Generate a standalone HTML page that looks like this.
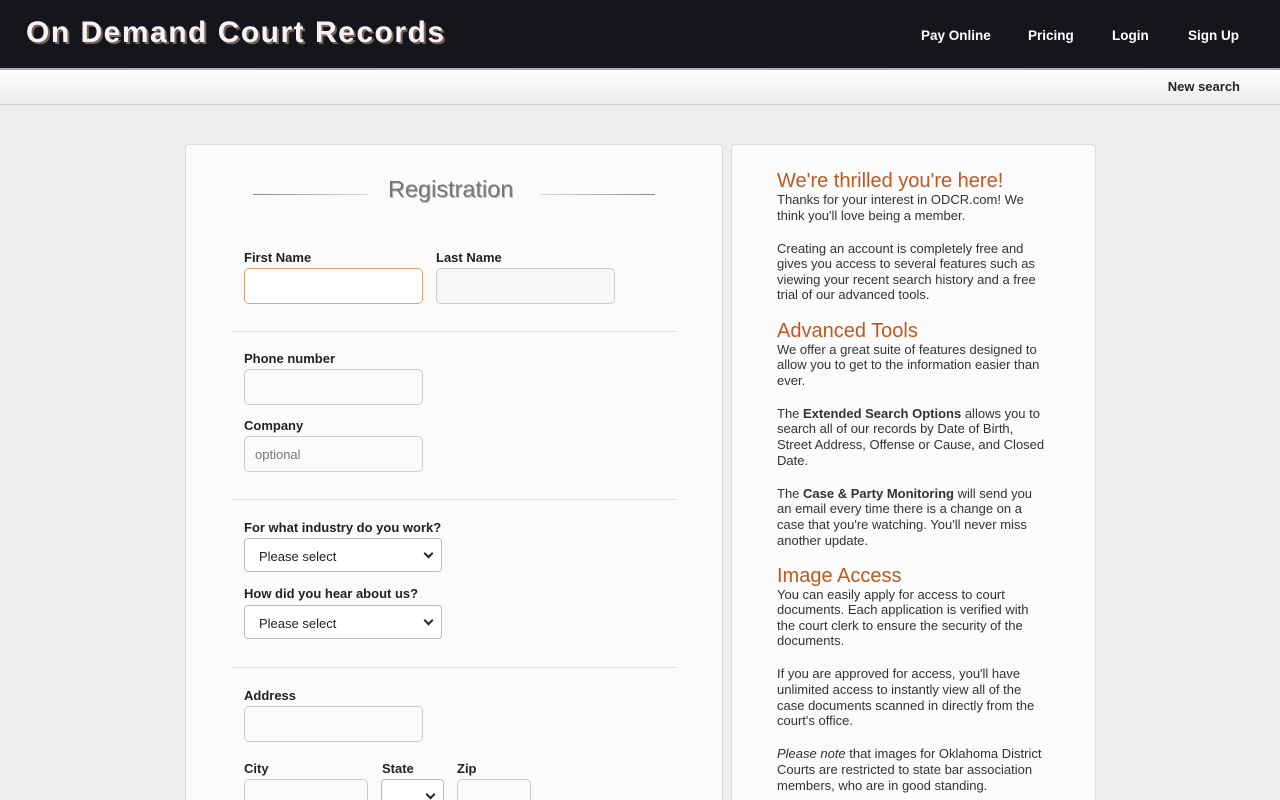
<!DOCTYPE html>
<html><head><style>
html,body{margin:0;width:1280px;height:800px;overflow:hidden}
body{background:#eceeef;font-family:"Liberation Sans",Arial,sans-serif;position:relative}
.hdr{position:absolute;left:0;top:0;width:1280px;height:68px;background:#14161b;border-bottom:2px solid #aab}
.logo{position:absolute;left:26px;top:16px;font:900 30px "Liberation Sans",sans-serif;color:#f4f4f8;letter-spacing:1.5px;text-shadow:2px 2px 0 #765}
.nav a{position:absolute;top:28px;color:#fff;font-weight:bold;font-size:13.5px;text-decoration:none}
.sub{position:absolute;left:0;top:70px;width:1280px;height:34px;background:linear-gradient(#fff,#ececec);border-bottom:1px solid #ccc}
.sub span{position:absolute;right:40px;top:9px;font-weight:bold;font-size:13px;color:#222}
.panel{position:absolute;background:#fbfbfb;border:1px solid #ddd;border-radius:4px}
.lbl{position:absolute;font-weight:bold;font-size:13px;color:#222}
.in{position:absolute;width:177px;height:34px;border:1px solid #ccc;border-radius:5px;background:#fbfbfb}
.sel{position:absolute;width:198px;height:34px;border:1px solid #bbb;border-radius:4px;background:#fff;font-size:13px;color:#222;box-sizing:border-box;padding:10px 14px}
.sel:after{content:"";position:absolute;right:9px;top:11px;width:5px;height:5px;border-right:2px solid #222;border-bottom:2px solid #222;transform:rotate(45deg)}
.sep{position:absolute;left:231px;width:445px;height:1px;background:#ddd}
.r{position:absolute;left:777px;width:272px;font-size:13px;line-height:15.6px;color:#333}
.r h2{margin:0;font-weight:normal;font-size:20px;line-height:21px;color:#c2581f}
.r p{margin:0 0 17.5px}
</style></head><body>
<div class="hdr"><div class="logo">On Demand Court Records</div>
<div class="nav"><a style="left:921px">Pay Online</a><a style="left:1028px">Pricing</a><a style="left:1112px">Login</a><a style="left:1188px">Sign Up</a></div></div>
<div class="sub"><span>New search</span></div>
<div class="panel" style="left:185px;top:144px;width:536px;height:680px"></div>
<div class="panel" style="left:731px;top:144px;width:363px;height:680px"></div>
<div style="position:absolute;left:253px;top:194px;width:115px;height:1px;background:linear-gradient(90deg,#888,#ddd)"></div>
<div style="position:absolute;left:540px;top:194px;width:115px;height:1px;background:linear-gradient(90deg,#ddd,#888)"></div>
<div style="position:absolute;left:388px;top:176px;font-size:23.5px;color:#777;text-shadow:1px 1px 0 #bbb">Registration</div>
<div class="lbl" style="left:244px;top:250px">First Name</div>
<div class="lbl" style="left:436px;top:250px">Last Name</div>
<div class="in" style="left:244px;top:268px;border-color:#e9a173;background:#fff"></div>
<div class="in" style="left:436px;top:268px;background:#f8f8f8"></div>
<div class="sep" style="top:331px"></div>
<div class="lbl" style="left:244px;top:351px">Phone number</div>
<div class="in" style="left:244px;top:369px"></div>
<div class="lbl" style="left:244px;top:418px">Company</div>
<div class="in" style="left:244px;top:436px"><span style="position:absolute;left:10px;top:10px;font-size:13px;color:#777">optional</span></div>
<div class="sep" style="top:499px"></div>
<div class="lbl" style="left:244px;top:520px">For what industry do you work?</div>
<div class="sel" style="left:244px;top:538px">Please select</div>
<div class="lbl" style="left:244px;top:586px">How did you hear about us?</div>
<div class="sel" style="left:244px;top:605px">Please select</div>
<div class="sep" style="top:667px"></div>
<div class="lbl" style="left:244px;top:688px">Address</div>
<div class="in" style="left:244px;top:706px"></div>
<div class="lbl" style="left:244px;top:761px">City</div>
<div class="lbl" style="left:382px;top:761px">State</div>
<div class="lbl" style="left:457px;top:761px">Zip</div>
<div class="in" style="left:244px;top:779px;width:122px"></div>
<div class="sel" style="left:381px;top:779px;width:63px"></div>
<div class="in" style="left:457px;top:779px;width:72px"></div>
<div class="r" style="top:171px">
<h2>We're thrilled you're here!</h2>
<p>Thanks for your interest in ODCR.com! We think you'll love being a member.</p>
<p>Creating an account is completely free and gives you access to several features such as viewing your recent search history and a free trial of our advanced tools.</p>
<h2>Advanced Tools</h2>
<p>We offer a great suite of features designed to allow you to get to the information easier than ever.</p>
<p>The <b>Extended Search Options</b> allows you to search all of our records by Date of Birth, Street Address, Offense or Cause, and Closed Date.</p>
<p>The <b>Case &amp; Party Monitoring</b> will send you an email every time there is a change on a case that you're watching. You'll never miss another update.</p>
<h2>Image Access</h2>
<p>You can easily apply for access to court documents. Each application is verified with the court clerk to ensure the security of the documents.</p>
<p>If you are approved for access, you'll have unlimited access to instantly view all of the case documents scanned in directly from the court's office.</p>
<p><i>Please note</i> that images for Oklahoma District Courts are restricted to state bar association members, who are in good standing.</p>
</div>
</body></html>
